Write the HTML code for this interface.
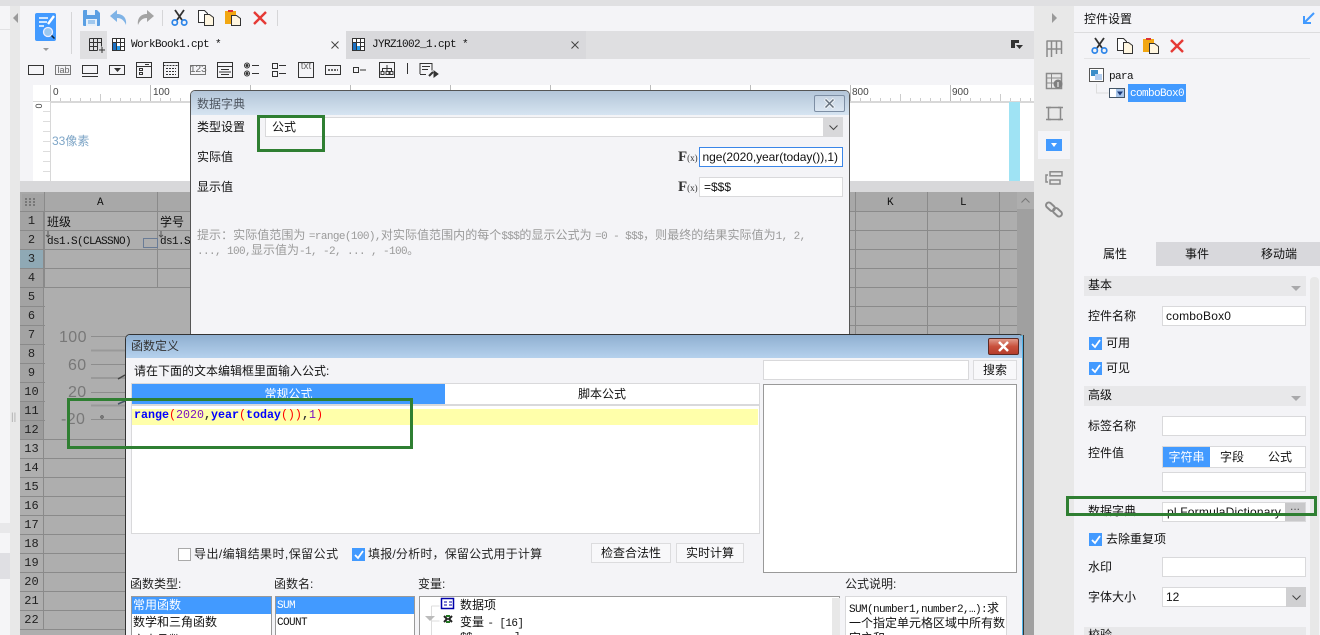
<!DOCTYPE html>
<html lang="zh"><head><meta charset="utf-8"><title>数据字典</title>
<style>
*{box-sizing:border-box}
html,body{margin:0;padding:0;width:1320px;height:635px;overflow:hidden;background:#f4f4f7}
body{position:relative;font:12px/16px "Liberation Sans","WenQuanYi Zen Hei","Noto Sans CJK SC",sans-serif;color:#111}
.a{position:absolute}
.t{position:absolute;white-space:nowrap;line-height:16px;height:16px}
.m{font-family:"Liberation Mono","WenQuanYi Zen Hei","Noto Sans CJK SC",monospace;font-size:11px;letter-spacing:-.6px}
.in{position:absolute;background:#fff;border:1px solid #d9d9db}
.sec{position:absolute;left:1084px;width:222px;height:20px;background:#e8e8ea}
.tri{position:absolute;width:0;height:0;border-left:5px solid transparent;border-right:5px solid transparent;border-top:5px solid #a9a9ab}
.cb{position:absolute;width:13px;height:13px;background:#429aff}
.cb svg{position:absolute;left:0;top:0}
.green{position:absolute;border:3px solid #2f7f32}
.rn{position:absolute;left:20px;width:24px;height:19px;text-align:center;line-height:18px;font-size:12px;font-family:"Liberation Mono",monospace;border-bottom:1px solid #8a8a8a;border-right:1px solid #8a8a8a;background:#a3a3a3;color:#222}
.btn{position:absolute;background:#f8f8fa;border:1px solid #dcdcde;text-align:center;line-height:18px}
svg{display:block;overflow:visible}
</style></head><body>

<!-- top strip and left panel -->
<div class="a" style="left:0;top:0;width:1320px;height:6px;background:#e0e0e2"></div>
<div class="a" style="left:0;top:6px;width:10px;height:629px;background:#f5f5f7"></div>
<div class="a" style="left:0;top:29px;width:10px;height:1px;background:#e2e2e4"></div>
<div class="a" style="left:0;top:523px;width:10px;height:10px;background:#e8e8ea"></div>
<div class="a" style="left:0;top:553px;width:10px;height:26px;background:#dfdfe3"></div>
<div class="a" style="left:10px;top:6px;width:10px;height:629px;background:#e8e8e8"></div>
<div class="a" style="left:13px;top:13px;width:0;height:0;border-top:5px solid transparent;border-bottom:5px solid transparent;border-right:5px solid #9a9a9a"></div>
<div class="t" style="left:11px;top:410px;color:#aaa;font-size:10px">||</div>

<!-- tool bar -->
<svg class="a" style="left:35px;top:13px" width="22" height="29" viewBox="0 0 22 29">
<rect x="0" y="0" width="21" height="28" rx="2" fill="#429aff"/>
<path d="M4 5h9M4 9h8M4 13h5" stroke="#fff" stroke-width="1.6"/>
<path d="M13 11l6-8" stroke="#fff" stroke-width="2.4"/>
<circle cx="13" cy="19" r="4.5" fill="#9cc8f0" stroke="#eef" stroke-width="1.3"/>
<path d="M16.5 22.5l3 3" stroke="#123" stroke-width="1.5"/></svg>
<div class="a" style="left:43px;top:48px;width:0;height:0;border-left:3px solid transparent;border-right:3px solid transparent;border-top:3px solid #999"></div>
<div class="a" style="left:71px;top:12px;width:1px;height:42px;background:#d6d6d8"></div>
<svg class="a" style="left:83px;top:10px" width="17" height="16" viewBox="0 0 17 16"><path d="M0 1q0-1 1-1h13l3 3v12q0 1-1 1H1q-1 0-1-1z" fill="#5a9fe3"/><rect x="4" y="0" width="8" height="5" fill="#eaf2fb"/><rect x="3" y="9" width="11" height="7" fill="#e6f0fa"/><path d="M5 11h7M5 13h7" stroke="#5a9fe3"/></svg>
<svg class="a" style="left:110px;top:10px" width="17" height="16" viewBox="0 0 17 16"><path d="M7 0L0 6l7 6V8c4 0 7 2 9 7 1-7-3-11-9-11z" fill="#7fb3e6"/></svg>
<svg class="a" style="left:137px;top:10px" width="17" height="16" viewBox="0 0 17 16"><path d="M10 0l7 6-7 6V8c-4 0-7 2-9 7-1-7 3-11 9-11z" fill="#a3a3a3"/></svg>
<div class="a" style="left:162px;top:10px;width:1px;height:16px;background:#d6d6d8"></div>
<svg class="a" style="left:171px;top:10px" width="17" height="16" viewBox="0 0 17 16"><path d="M4 0l7 10M13 0L6 10" stroke="#333" stroke-width="1.800" fill="none"/><circle cx="3.800" cy="12.500" r="2.600" fill="none" stroke="#2f86e8" stroke-width="1.700"/><circle cx="13.200" cy="12.500" r="2.600" fill="none" stroke="#2f86e8" stroke-width="1.700"/></svg>
<svg class="a" style="left:198px;top:10px" width="16" height="16" viewBox="0 0 16 16"><path d="M.5.5h6l3 3v9h-9z" fill="#fff" stroke="#333"/><path d="M6.500 4.500h5l4 3v8h-9z" fill="#fff6e0" stroke="#333"/></svg>
<svg class="a" style="left:225px;top:10px" width="16" height="16" viewBox="0 0 16 16"><rect x="0" y="1" width="11" height="13" fill="#f2a712"/><rect x="3" y="0" width="5" height="2" fill="#d33"/><path d="M6.500 5.500h5l4 3v7h-9z" fill="#fff6e0" stroke="#333"/></svg>
<svg class="a" style="left:253px;top:11px" width="14" height="14" viewBox="0 0 14 14"><path d="M1 1l12 12M13 1L1 13" stroke="#e53935" stroke-width="2.400"/></svg>
<div class="a" style="left:277px;top:10px;width:1px;height:16px;background:#d6d6d8"></div>

<!-- tab row -->
<div class="a" style="left:80px;top:31px;width:954px;height:28px;background:#dfdfe1"></div>
<div class="a" style="left:107px;top:31px;width:239px;height:28px;background:#f4f4f7"></div>
<div class="a" style="left:346px;top:31px;width:240px;height:28px;background:#d9d9dc"></div>
<svg class="a" style="left:89px;top:38px" width="16" height="15" viewBox="0 0 16 15"><path d="M.5.5h12v8M.5.5v12h8M.5 4.500h12M.5 8.500h8M4.500.5v12M8.500.5v12" fill="none" stroke="#333"/><path d="M10 12h6M13 9v6" stroke="#333"/></svg>
<svg class="a" style="left:112px;top:38px" width="13" height="13" viewBox="0 0 13 13"><rect x=".5" y=".5" width="12" height="12" fill="#fff" stroke="#333"/><path d="M.5 4.500h12M.5 8.500h12M4.500.5v12M8.500.5v12" stroke="#333"/><rect x="1" y="5" width="3" height="7" fill="#1c6fc2"/><rect x="5" y="8" width="3" height="4" fill="#2b9be8"/></svg>
<div class="t m" style="left:131px;top:37px">WorkBook1.cpt *</div>
<svg class="a" style="left:331px;top:41px" width="8" height="8"><path d="M.5.5l7 7M7.500.5l-7 7" stroke="#444"/></svg>
<svg class="a" style="left:352px;top:38px" width="13" height="13" viewBox="0 0 13 13"><rect x=".5" y=".5" width="12" height="12" fill="#fff" stroke="#333"/><path d="M.5 4.500h12M.5 8.500h12M4.500.5v12M8.500.5v12" stroke="#333"/><rect x="1" y="5" width="3" height="7" fill="#1c6fc2"/><rect x="5" y="8" width="3" height="4" fill="#2b9be8"/></svg>
<div class="t m" style="left:372px;top:37px">JYRZ1002_1.cpt *</div>
<svg class="a" style="left:571px;top:41px" width="8" height="8"><path d="M.5.5l7 7M7.500.5l-7 7" stroke="#444"/></svg>
<svg class="a" style="left:1011px;top:40px" width="13" height="10"><path d="M0 0h8v3H4v5H0z" fill="#333"/><path d="M5 5h7l-3.500 4z" fill="#333"/></svg>

<!-- widget icons -->
<svg class="a" style="left:28px;top:62px" width="420" height="18" viewBox="0 0 420 18" fill="none" stroke="#333">
<rect x=".5" y="3.500" width="15" height="9"/>
<rect x="27.500" y="3.500" width="15" height="9" stroke="#777"/>
<rect x="54.500" y="3.500" width="15" height="8"/><path d="M54 14.500h16"/>
<rect x="81.500" y="3.500" width="15" height="9"/><path d="M86 6h7l-3.500 4z" fill="#333" stroke="none"/>
<rect x="108.500" y=".5" width="15" height="15"/><path d="M108.500 4.500h15M117 2.500h4"/><rect x="111.500" y="6.500" width="3" height="2"/><rect x="111.500" y="10.500" width="3" height="2"/>
<rect x="135.500" y=".5" width="15" height="15"/><path d="M135.500 3.500h15M138 6.500h10M138 9.500h10M138 12.500h10" stroke-dasharray="2 1"/>
<rect x="162.500" y="3.500" width="15" height="9" stroke="#777"/>
<rect x="189.500" y=".5" width="15" height="15"/><path d="M189.500 4.500h15M193 7.500h8M191 10h12M193 12.500h8"/>
<circle cx="219" cy="3.500" r="2.500"/><circle cx="219" cy="11.500" r="2.500"/><circle cx="219" cy="3.500" r="1" fill="#333"/><circle cx="219" cy="11.500" r="1" fill="#333"/><path d="M224 3.500h7M224 11.500h7"/>
<rect x="244.500" y="1.500" width="5" height="5"/><rect x="244.500" y="9.500" width="5" height="5"/><path d="M251 3.500h7M251 11.500h7"/>
<rect x="270.500" y=".5" width="15" height="15"/>
<rect x="297.500" y="3.500" width="15" height="9"/><path d="M300 8h10" stroke-width="2" stroke-dasharray="2 1" stroke="#666"/>
<rect x="325.500" y="5.500" width="5" height="5"/><path d="M332 8h6"/>
<rect x="351.500" y=".5" width="15" height="15"/><path d="M359 3v3M354.500 9V6.500h9V9M359 6.500V9"/><rect x="353" y="9.500" width="3" height="3"/><rect x="358" y="9.500" width="3" height="3"/><rect x="362" y="9.500" width="3" height="3"/>
<path d="M379.500 1v11"/>
<path d="M392 12V1.500h12v7M394 4.500h8M394 7.500h6M392 12.500h6"/><path d="M401 14l4-4" stroke-width="2"/>
<path d="M406 9l4 3-4 3z" fill="#333"/>
</svg>
<div class="t" style="left:56px;top:62px;font-size:9px;color:#666;width:15px;text-align:center">lab</div>
<div class="t" style="left:190px;top:62px;font-size:10px;color:#666;width:16px;text-align:center">123</div>
<div class="t" style="left:298px;top:59px;font-size:10px;color:#666;width:16px;text-align:center">txt</div>

<!-- ruler and design -->
<div class="a" style="left:20px;top:85px;width:1014px;height:96px;background:#f4f4f7"></div>
<div class="a" style="left:33px;top:85px;width:1001px;height:17px;background:#fff"></div>
<div class="a" style="left:50px;top:85px;width:984px;height:17px;background:
 repeating-linear-gradient(90deg,#bbb 0 1px,transparent 1px 100px) 0 0/100% 17px no-repeat,
 repeating-linear-gradient(90deg,#ccc 0 1px,transparent 1px 50px) 0 9px/100% 8px no-repeat,
 repeating-linear-gradient(90deg,#ccc 0 1px,transparent 1px 10px) 0 13px/100% 4px no-repeat"></div>
<div class="a" style="left:33px;top:101px;width:1001px;height:2px;background:#d8d8d8"></div>
<div class="t" style="left:53px;top:85px;font-size:10px;color:#444">0</div>
<div class="t" style="left:153px;top:85px;font-size:10px;color:#444">100</div>
<div class="t" style="left:852px;top:85px;font-size:10px;color:#444">800</div>
<div class="t" style="left:952px;top:85px;font-size:10px;color:#444">900</div>
<div class="a" style="left:33px;top:102px;width:17px;height:79px;background:repeating-linear-gradient(180deg,#fff 0 9px,#ddd 9px 10px) 10px 0/7px 100% no-repeat,#fff"></div>
<div class="a" style="left:50px;top:102px;width:1px;height:79px;background:#d8d8d8"></div>
<div class="t" style="left:36px;top:98px;font-size:9px;color:#444;transform:rotate(90deg)">0</div>
<div class="a" style="left:51px;top:103px;width:983px;height:78px;background:#fff"></div>
<div class="a" style="left:1009px;top:102px;width:11px;height:79px;background:#9fe3f4"></div>
<div class="t" style="left:52px;top:133px;font-size:12px;color:#7fa6c7">33像素</div>
<div class="a" style="left:20px;top:181px;width:1014px;height:11px;background:#d8d8da"></div>

<!-- grid -->
<div class="a" style="left:20px;top:192px;width:997px;height:443px;background:#aeaeae"></div>
<div class="a" style="left:44px;top:193px;width:973px;height:442px;background:repeating-linear-gradient(180deg,transparent 0 18px,#8a8a8a 18px 19px)"></div>
<div class="a" style="left:20px;top:192px;width:997px;height:20px;background:#a8a8a8;border-bottom:1px solid #8a8a8a"></div>
<div class="a" style="left:44px;top:192px;width:114px;height:96px;border-right:1px solid #8a8a8a;border-left:1px solid #8a8a8a"></div>
<div class="a" style="left:855px;top:192px;width:1px;height:443px;background:#8a8a8a"></div>
<div class="a" style="left:927px;top:192px;width:1px;height:443px;background:#8a8a8a"></div>
<div class="a" style="left:999px;top:192px;width:1px;height:443px;background:#8a8a8a"></div>
<div class="a" style="left:45px;top:288px;width:145px;height:152px;background:#aeaeae;border-bottom:1px solid #8a8a8a"></div>
<div class="a" style="left:22px;top:194px;width:22px;height:17px;background:#a3a3a3"></div>
<svg class="a" style="left:25px;top:198px" width="11" height="9"><path d="M0 1h11M0 4h11M0 7h11" stroke="#777" stroke-width="2" stroke-dasharray="2 2"/></svg>
<div class="t m" style="left:97px;top:195px;color:#111">A</div>
<div class="t m" style="left:887px;top:195px;color:#111">K</div>
<div class="t m" style="left:960px;top:195px;color:#111">L</div>
<div class="rn" style="top:212px">1</div><div class="rn" style="top:231px">2</div><div class="rn" style="top:250px;background:#8fa9b5">3</div><div class="rn" style="top:269px">4</div><div class="rn" style="top:288px">5</div><div class="rn" style="top:307px">6</div><div class="rn" style="top:326px">7</div><div class="rn" style="top:345px">8</div><div class="rn" style="top:364px">9</div><div class="rn" style="top:383px">10</div><div class="rn" style="top:402px;background:#9c9c9c">11</div><div class="rn" style="top:421px;background:#9c9c9c">12</div><div class="rn" style="top:440px;background:#aeaeae">13</div><div class="rn" style="top:459px;background:#aeaeae">14</div><div class="rn" style="top:478px;background:#aeaeae">15</div><div class="rn" style="top:497px;background:#aeaeae">16</div><div class="rn" style="top:516px;background:#aeaeae">17</div><div class="rn" style="top:535px;background:#aeaeae">18</div><div class="rn" style="top:554px;background:#aeaeae">19</div><div class="rn" style="top:573px;background:#aeaeae">20</div><div class="rn" style="top:592px;background:#aeaeae">21</div><div class="rn" style="top:611px;background:#aeaeae">22</div>
<div class="t" style="left:47px;top:214px">班级</div>
<div class="t" style="left:160px;top:214px">学号</div>
<div class="t m" style="left:47px;top:234px">ds1.S(CLASSNO)</div>
<div class="t m" style="left:160px;top:234px">ds1.S</div>
<div class="a" style="left:143px;top:238px;width:15px;height:10px;border:1px solid #6a7c96"></div>
<svg class="a" style="left:45px;top:231px" width="6" height="7"><path d="M3 0v6M1 4l2 2 2-2" stroke="#555" fill="none"/></svg>
<svg class="a" style="left:158px;top:231px" width="6" height="7"><path d="M3 0v6M1 4l2 2 2-2" stroke="#555" fill="none"/></svg>
<!-- chart -->
<div class="t" style="left:59px;top:330px;font-size:16px;color:#787878;letter-spacing:.4px">100</div>
<div class="t" style="left:68px;top:358px;font-size:16px;color:#787878;letter-spacing:.4px">60</div>
<div class="t" style="left:68px;top:385px;font-size:16px;color:#787878;letter-spacing:.4px">20</div>
<div class="t" style="left:61px;top:412px;font-size:16px;color:#787878;letter-spacing:.4px">-20</div>
<svg class="a" style="left:91px;top:330px" width="35" height="100"><path d="M0 6.500h35M0 34.500h35M0 62.500h35M0 89.500h35" stroke="#8d8d8d"/><path d="M0 20.500h35M0 48h35M0 75.500h35" stroke="#999" stroke-width="2"/><path d="M27 49l7-4" stroke="#444" stroke-width="1.500"/><path d="M27 74l7-3" stroke="#456" stroke-width="1.500"/><circle cx="11" cy="87" r="1.200" fill="none" stroke="#555"/></svg>
<!-- scrollbars -->
<div class="a" style="left:1017px;top:192px;width:17px;height:443px;background:#a0a0a0"></div>
<div class="a" style="left:1017px;top:192px;width:17px;height:17px;background:#aeaeae"></div>
<svg class="a" style="left:1021px;top:198px" width="9" height="5"><path d="M.5 4.500l4-4 4 4" stroke="#777" fill="none"/></svg>

<!-- dialog 1 -->
<div class="a" style="left:190px;top:90px;width:660px;height:250px;background:#f4f4f7;border:1px solid #555;border-bottom:0;border-radius:5px 5px 0 0"></div>
<div class="a" style="left:191px;top:91px;width:658px;height:24px;background:linear-gradient(#b3c5d8,#d6e4f1);border-radius:4px 4px 0 0"></div>
<div class="t" style="left:197px;top:96px;color:#4e5660">数据字典</div>
<div class="a" style="left:814px;top:95px;width:31px;height:17px;border:1px solid #7d8ea4;border-radius:2px;background:linear-gradient(#c5d3e2,#dbe6f1)"></div>
<svg class="a" style="left:824px;top:98px" width="11" height="11"><path d="M1 1l9 9M10 1l-9 9" stroke="#eef2f6" stroke-width="3.500"/><path d="M1.500 1.500l8 8M9.500 1.500l-8 8" stroke="#66727f" stroke-width="1.500"/></svg>
<div class="t" style="left:197px;top:119px">类型设置</div>
<div class="a" style="left:265px;top:117px;width:578px;height:20px;background:#fff;border-top:1px solid #d9d9db;border-left:1px solid #d9d9db;border-bottom:1px solid #d9d9db"></div>
<div class="a" style="left:823px;top:117px;width:20px;height:20px;background:#d8d8da"></div>
<svg class="a" style="left:829px;top:125px" width="9" height="5"><path d="M.5.5l4 4 4-4" stroke="#444" fill="none"/></svg>
<div class="t" style="left:272px;top:119px">公式</div>
<div class="t" style="left:197px;top:149px">实际值</div>
<div class="t" style="left:197px;top:179px">显示值</div>
<div class="t" style="left:678px;top:149px;font:700 15px/16px 'Liberation Serif',serif;color:#333">F<span style="font-size:9px;font-weight:400">(x)</span></div>
<div class="t" style="left:678px;top:179px;font:700 15px/16px 'Liberation Serif',serif;color:#333">F<span style="font-size:9px;font-weight:400">(x)</span></div>
<div class="in" style="left:699px;top:147px;width:144px;height:20px;border-color:#3a86e8"><div style="position:absolute;left:3px;right:4px;top:0;height:18px;overflow:hidden"><div style="position:absolute;right:0;top:1px;white-space:nowrap;letter-spacing:-.05px">range(2020,year(today()),1)</div></div></div>
<div class="in" style="left:699px;top:177px;width:144px;height:20px"><div style="position:absolute;left:4px;top:1px">=$$$</div></div>
<div class="t" style="left:197px;top:227px;color:#9a9a9a;letter-spacing:.05px">提示：实际值范围为 <span class="m" style="color:#9a9a9a">=range(100),</span>对实际值范围内的每个<span class="m">$$$</span>的显示公式为 <span class="m">=0 - $$$</span>，则最终的结果实际值为<span class="m">1, 2,</span></div>
<div class="t" style="left:197px;top:242px;color:#9a9a9a"><span class="m">..., 100,</span>显示值为<span class="m">-1, -2, ... , -100</span>。</div>

<!-- dialog 2 -->
<div class="a" style="left:125px;top:334px;width:899px;height:310px;background:#f4f4f7;border:1px solid #333;border-right:2px solid #4fb4ea;border-radius:5px 5px 0 0"></div>
<div class="a" style="left:126px;top:335px;width:896px;height:23px;background:linear-gradient(#8fafd0,#b5d1ed);border-radius:4px 4px 0 0"></div>
<div class="a" style="left:1023px;top:335px;width:1px;height:300px;background:#333"></div>
<div class="t" style="left:131px;top:338px;color:#333">函数定义</div>
<div class="a" style="left:988px;top:338px;width:31px;height:17px;border:1px solid #5e2a24;border-radius:2px;background:linear-gradient(#e09a8a 0,#c9503c 50%,#b53d2c 100%)"></div>
<svg class="a" style="left:998px;top:341px" width="11" height="11"><path d="M1 1l9 9M10 1l-9 9" stroke="#fff" stroke-width="2.500"/></svg>
<div class="t" style="left:134px;top:363px">请在下面的文本编辑框里面输入公式:</div>
<div class="in" style="left:763px;top:360px;width:206px;height:20px"></div>
<div class="btn" style="left:973px;top:360px;width:44px;height:20px">搜索</div>
<div class="a" style="left:131px;top:383px;width:629px;height:151px;background:#fff;border:1px solid #d9d9db"></div>
<div class="a" style="left:132px;top:384px;width:313px;height:20px;background:#429aff;color:#fff;text-align:center;line-height:20px">常规公式</div>
<div class="a" style="left:445px;top:384px;width:314px;height:20px;text-align:center;line-height:20px">脚本公式</div>
<div class="a" style="left:132px;top:404px;width:627px;height:2px;background:#d9d9db"></div>
<div class="a" style="left:132px;top:409px;width:626px;height:16px;background:#ffffaa"></div>
<div class="t" style="left:134px;top:406px;font:700 11.670px/16px 'Liberation Mono',monospace;top:407px"><span style="color:#00f">range</span><span style="color:#f00;font-weight:400">(</span><span style="color:#7a10c0;font-weight:400">2020</span><span style="color:#333">,</span><span style="color:#00f">year</span><span style="color:#f00;font-weight:400">(</span><span style="color:#00f">today</span><span style="color:#f00;font-weight:400">())</span><span style="color:#333">,</span><span style="color:#7a10c0;font-weight:400">1</span><span style="color:#f00;font-weight:400">)</span></div>
<div class="a" style="left:178px;top:548px;width:13px;height:13px;background:#fff;border:1px solid #aaa"></div>
<div class="t" style="left:194px;top:546px;color:#222;letter-spacing:.45px">导出/编辑结果时,保留公式</div>
<div class="cb" style="left:352px;top:548px"><svg width="13" height="13"><path d="M3 7l3 3 5-7" stroke="#fff" stroke-width="1.800" fill="none"/></svg></div>
<div class="t" style="left:368px;top:546px;color:#222;letter-spacing:.2px">填报/分析时，保留公式用于计算</div>
<div class="btn" style="left:591px;top:543px;width:80px;height:20px">检查合法性</div>
<div class="btn" style="left:676px;top:543px;width:68px;height:20px">实时计算</div>
<div class="a" style="left:763px;top:384px;width:254px;height:189px;background:#fff;border:1px solid #999"></div>
<div class="t" style="left:130px;top:576px;color:#222">函数类型:</div>
<div class="t" style="left:274px;top:576px;color:#222">函数名:</div>
<div class="t" style="left:418px;top:576px;color:#222">变量:</div>
<div class="t" style="left:845px;top:576px;color:#222">公式说明:</div>
<div class="a" style="left:131px;top:596px;width:141px;height:50px;background:#fff;border:1px solid #999"></div>
<div class="a" style="left:132px;top:597px;width:139px;height:17px;background:#429aff"></div>
<div class="t" style="left:133px;top:597px;color:#fff">常用函数</div>
<div class="t" style="left:133px;top:614px">数学和三角函数</div>
<div class="t" style="left:133px;top:632px">文本函数</div>
<div class="a" style="left:275px;top:596px;width:140px;height:50px;background:#fff;border:1px solid #999"></div>
<div class="a" style="left:276px;top:597px;width:138px;height:17px;background:#429aff"></div>
<div class="t m" style="left:277px;top:598px;color:#fff">SUM</div>
<div class="t m" style="left:277px;top:615px">COUNT</div>
<div class="a" style="left:419px;top:596px;width:421px;height:50px;background:#fff;border:1px solid #999"></div>
<div class="a" style="left:832px;top:598px;width:8px;height:37px;background:#e8e8e8"></div>
<svg class="a" style="left:424px;top:597px" width="35" height="38"><path d="M7.500 9v30M7.500 9h8M7.500 24h8" stroke="#ddd" fill="none"/><path d="M1 19h10l-5 5z" fill="#bbb"/><rect x="17.500" y="1.500" width="12" height="10" fill="#fff" stroke="#00a" stroke-width="1.500"/><path d="M20 5h3M20 8h3M25 5h3M25 8h3" stroke="#00a"/><path d="M20 19l3 3-3 3M28 19l-3 3 3 3" stroke="#222" stroke-width="2" fill="none"/><path d="M22 19h4M22 25h4" stroke="#272" stroke-width="2"/></svg>
<div class="t" style="left:460px;top:597px">数据项</div>
<div class="t" style="left:460px;top:614px">变量 <span class="m">- [16]</span></div>
<div class="t m" style="left:460px;top:630px">$$&nbsp;&nbsp;&nbsp;&nbsp;&nbsp;&nbsp;&nbsp;]</div>
<div class="a" style="left:845px;top:596px;width:162px;height:50px;background:#fff;border:1px solid #d9d9db"></div>
<div class="t" style="left:849px;top:600px"><span class="m">SUM(number1,number2,…):</span>求</div>
<div class="t" style="left:849px;top:615px">一个指定单元格区域中所有数</div>
<div class="t" style="left:849px;top:630px">字之和。</div>

<!-- right strip -->
<div class="a" style="left:1034px;top:6px;width:40px;height:629px;background:#e8e8e8"></div>
<div class="a" style="left:1052px;top:13px;width:0;height:0;border-top:5px solid transparent;border-bottom:5px solid transparent;border-left:5px solid #9a9a9a"></div>
<svg class="a" style="left:1046px;top:40px" width="18" height="18" fill="none" stroke="#8a8a8a" stroke-width="1.500"><path d="M.5 1h15M1 1v16M.5 9h15M5.500 1v16M10.500 1v13M15.500 1v13"/></svg>
<svg class="a" style="left:1046px;top:73px" width="18" height="17"><rect x=".5" y=".5" width="15" height="15" fill="none" stroke="#8a8a8a" stroke-width="1.500"/><path d="M1 5h15M1 10h8M5.500 1v15" stroke="#8a8a8a"/><circle cx="12" cy="11" r="4.500" fill="#7f7f7f"/><path d="M12 9v5" stroke="#fff"/></svg>
<svg class="a" style="left:1046px;top:105px" width="17" height="17" fill="none" stroke="#8a8a8a" stroke-width="1.500"><rect x="2.500" y="2.500" width="12" height="12"/><path d="M0 2.500h5M12 2.500h5M0 14.500h5M12 14.500h5"/></svg>
<div class="a" style="left:1038px;top:131px;width:32px;height:28px;background:#f4f4f7"></div>
<div class="a" style="left:1046px;top:139px;width:16px;height:12px;background:#429aff"></div>
<div class="a" style="left:1051px;top:143px;width:0;height:0;border-left:3px solid transparent;border-right:3px solid transparent;border-top:4px solid #fff"></div>
<svg class="a" style="left:1045px;top:171px" width="18" height="15" fill="none" stroke="#8a8a8a" stroke-width="1.500"><rect x="5" y=".8" width="12" height="4"/><rect x="5" y="9" width="10" height="4"/><path d="M3 4H1v7h2"/></svg>
<svg class="a" style="left:1046px;top:201px" width="17" height="17" fill="none" stroke="#8a8a8a" stroke-width="2"><rect x="-.5" y="3" width="10" height="5.500" rx="2.700" transform="rotate(42 4.500 5.700)"/><rect x="6.500" y="8.500" width="10" height="5.500" rx="2.700" transform="rotate(42 11.500 11.200)"/></svg>

<!-- right panel -->
<div class="a" style="left:1074px;top:6px;width:246px;height:629px;background:#f4f4f7"></div>
<div class="t" style="left:1084px;top:11px">控件设置</div>
<svg class="a" style="left:1303px;top:12px" width="12" height="12"><path d="M11 1L2 10" stroke="#429aff" stroke-width="2"/><path d="M1 4v7h7" stroke="#429aff" stroke-width="2" fill="none"/></svg>
<div class="a" style="left:1074px;top:32px;width:246px;height:1px;background:#dcdcde"></div>
<svg class="a" style="left:1091px;top:38px" width="17" height="16" viewBox="0 0 17 16"><path d="M4 0l7 10M13 0L6 10" stroke="#333" stroke-width="1.800" fill="none"/><circle cx="3.800" cy="12.500" r="2.600" fill="none" stroke="#2f86e8" stroke-width="1.700"/><circle cx="13.200" cy="12.500" r="2.600" fill="none" stroke="#2f86e8" stroke-width="1.700"/></svg>
<svg class="a" style="left:1117px;top:38px" width="16" height="16" viewBox="0 0 16 16"><path d="M.5.5h6l3 3v9h-9z" fill="#fff" stroke="#333"/><path d="M6.500 4.500h5l4 3v8h-9z" fill="#fff6e0" stroke="#333"/></svg>
<svg class="a" style="left:1143px;top:38px" width="16" height="16" viewBox="0 0 16 16"><rect x="0" y="1" width="11" height="13" fill="#f2a712"/><rect x="3" y="0" width="5" height="2" fill="#d33"/><path d="M6.500 5.500h5l4 3v7h-9z" fill="#fff6e0" stroke="#333"/></svg>
<svg class="a" style="left:1170px;top:39px" width="14" height="14" viewBox="0 0 14 14"><path d="M1 1l12 12M13 1L1 13" stroke="#e53935" stroke-width="2.400"/></svg>
<div class="a" style="left:1084px;top:58px;width:226px;height:1px;background:#e4e4e6"></div>
<svg class="a" style="left:1089px;top:68px" width="15" height="14"><rect x=".5" y=".5" width="14" height="13" fill="#fff" stroke="#555"/><rect x="2" y="2" width="7" height="6" fill="#3b8dc8"/><rect x="6" y="6" width="7" height="6" fill="#b5cff0"/></svg>
<div class="t m" style="left:1109px;top:69px">para</div>
<svg class="a" style="left:1096px;top:84px" width="13" height="10"><path d="M.5 0v9h12" stroke="#ddd" fill="none"/></svg>
<svg class="a" style="left:1109px;top:88px" width="16" height="10"><rect x=".5" y=".5" width="15" height="9" fill="#fff" stroke="#456"/><rect x="7" y="1" width="8" height="8" fill="#a9c6ea"/><path d="M8 3.500h6l-3 4z" fill="#1c3a7a"/></svg>
<div class="a" style="left:1128px;top:84px;width:58px;height:18px;background:#429aff"></div>
<div class="t m" style="left:1130px;top:86px;color:#fff">comboBox0</div>

<div class="a" style="left:1156px;top:242px;width:164px;height:24px;background:#d8d8dc"></div>
<div class="t" style="left:1103px;top:246px">属性</div>
<div class="t" style="left:1185px;top:246px">事件</div>
<div class="t" style="left:1261px;top:246px">移动端</div>

<div class="a" style="left:1310px;top:277px;width:9px;height:358px;background:#e8e8e8;border-radius:4px 4px 0 0"></div>
<div class="sec" style="top:276px"></div><div class="t" style="left:1088px;top:277px">基本</div><div class="tri" style="left:1291px;top:286px"></div>
<div class="t" style="left:1088px;top:308px">控件名称</div>
<div class="in" style="left:1162px;top:306px;width:144px;height:20px"><div style="position:absolute;left:3px;top:1px;letter-spacing:.2px">comboBox0</div></div>
<div class="cb" style="left:1089px;top:337px"><svg width="13" height="13"><path d="M3 7l3 3 5-7" stroke="#fff" stroke-width="1.800" fill="none"/></svg></div>
<div class="t" style="left:1106px;top:335px">可用</div>
<div class="cb" style="left:1089px;top:362px"><svg width="13" height="13"><path d="M3 7l3 3 5-7" stroke="#fff" stroke-width="1.800" fill="none"/></svg></div>
<div class="t" style="left:1106px;top:360px">可见</div>
<div class="sec" style="top:386px"></div><div class="t" style="left:1088px;top:387px">高级</div><div class="tri" style="left:1291px;top:396px"></div>
<div class="t" style="left:1088px;top:418px">标签名称</div>
<div class="in" style="left:1162px;top:416px;width:144px;height:20px"></div>
<div class="t" style="left:1088px;top:445px">控件值</div>
<div class="in" style="left:1162px;top:446px;width:144px;height:22px"></div>
<div class="a" style="left:1163px;top:447px;width:47px;height:20px;background:#429aff;color:#fff;text-align:center;line-height:20px">字符串</div>
<div class="t" style="left:1220px;top:449px">字段</div>
<div class="t" style="left:1268px;top:449px">公式</div>
<div class="in" style="left:1162px;top:472px;width:144px;height:20px"></div>
<div class="in" style="left:1162px;top:502px;width:144px;height:20px;overflow:hidden"><div style="position:absolute;left:4px;top:1px;white-space:nowrap;letter-spacing:.2px">pl.FormulaDictionary</div></div>
<div class="a" style="left:1285px;top:503px;width:20px;height:18px;background:#c8c8ca"></div>
<div class="t" style="left:1290px;top:498px;color:#555">...</div>
<div class="t" style="left:1088px;top:503px">数据字典</div>
<div class="cb" style="left:1089px;top:533px"><svg width="13" height="13"><path d="M3 7l3 3 5-7" stroke="#fff" stroke-width="1.800" fill="none"/></svg></div>
<div class="t" style="left:1106px;top:531px">去除重复项</div>
<div class="t" style="left:1088px;top:559px">水印</div>
<div class="in" style="left:1162px;top:557px;width:144px;height:20px"></div>
<div class="t" style="left:1088px;top:589px">字体大小</div>
<div class="in" style="left:1162px;top:587px;width:144px;height:20px"><div style="position:absolute;left:3px;top:1px">12</div></div>
<div class="a" style="left:1286px;top:587px;width:20px;height:20px;background:#d0d0d2"></div>
<svg class="a" style="left:1292px;top:595px" width="9" height="5"><path d="M.5.5l4 4 4-4" stroke="#444" fill="none"/></svg>
<div class="sec" style="top:627px;height:8px"></div>
<div class="a" style="left:1088px;top:627px;height:8px;overflow:hidden;line-height:16px">校验</div>

<!-- green annotation boxes -->
<div class="green" style="left:257px;top:115px;width:68px;height:37px"></div>
<div class="green" style="left:67px;top:398px;width:346px;height:51px"></div>
<div class="green" style="left:1066px;top:496px;width:251px;height:20px"></div>
</body></html>
